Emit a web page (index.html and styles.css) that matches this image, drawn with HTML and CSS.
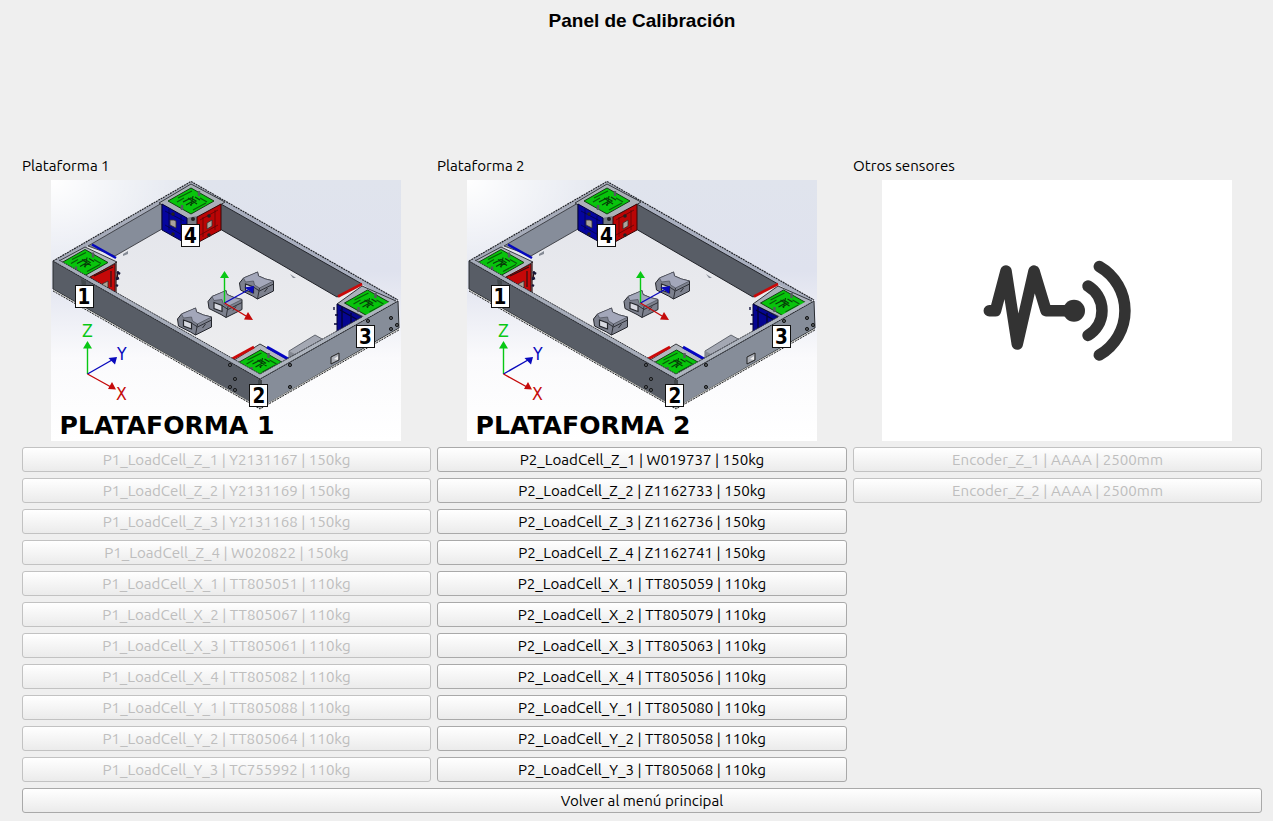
FILE: index.html
```
<!DOCTYPE html>
<html lang="es">
<head>
<meta charset="utf-8">
<title>Panel de Calibración</title>
<link rel="stylesheet" href="styles.css">
</head>
<body>
<svg class="defs" width="0" height="0" aria-hidden="true">
  <defs>
    <linearGradient id="sky" x1="0" y1="0" x2="0" y2="1">
      <stop offset="0" stop-color="#e0e4ed"/><stop offset=".35" stop-color="#dfe2ee"/><stop offset=".68" stop-color="#fafafc"/><stop offset="1" stop-color="#fff"/>
    </linearGradient>
    <radialGradient id="glow" cx="0" cy="0" r=".45">
      <stop offset="0" stop-color="#fff"/><stop offset="1" stop-color="#fff" stop-opacity="0"/>
    </radialGradient>
    <linearGradient id="floor" x1="0" y1="0" x2="0" y2="1">
      <stop offset="0" stop-color="#e2e4eb"/><stop offset="1" stop-color="#eeeeef"/>
    </linearGradient>
    <g id="plate">
      <path d="M0-13 23 0 0 13-23 0Z" fill="#08c40c" stroke="#123f12"/>
      <path d="M-13-3 1-10M-14 1-7-3M2 9 15 2M9-3 16 1" stroke="#075c09" stroke-width="1.2" fill="none"/>
      <path d="M-8 1 0-3 5 0-1 4M-3-3 6 3M2-5 0 5M-5 4 2 0M4-4 9-1" fill="none" stroke="#063f08" stroke-width="1.2"/>
      <path d="M8-10v5M-9 4v5" stroke="#555a60" stroke-width="2.4"/>
    </g>
    <g id="block">
      <path d="M0 12 4 7 14 3 18 1 19 5 26 8 34 10V20L18 28 13 25 1 19Z" fill="#7d818e" stroke="#24262c"/>
      <path d="M4 7 18 1 19 5 26 8 34 10 20 17 15 14 14 10 6 11Z" fill="#a3a7ba" stroke="#4a4d58" stroke-width=".7"/>
      <path d="M6 13 14 16V22L6 19Z" fill="#d9dbe2" stroke="#25272c" stroke-width="1.2"/>
      <path d="M20 17 18 28M14 16 20 20 34 13M28 17l-3 4" stroke="#2f3138" stroke-width="1" fill="none"/>
    </g>
    <symbol id="platform" viewBox="0 0 350 261">
      <rect width="350" height="261" fill="url(#sky)"/>
      <rect width="350" height="261" fill="url(#glow)"/>
      <path d="M140 6 344 121 209 196 7 81Z" fill="url(#floor)"/>
      <!-- rear walls -->
      <path d="M2 81 140 2 140 7 39 65 9 82Z" fill="#a6abb9"/>
      <path d="M37 66 111 23V49L64 76Z" fill="#868d9a" stroke="#292b30" stroke-width=".8"/>
      <path d="M140 2 347 120 340 121 140 7Z" fill="#a9afbf"/>
      <path d="M169 23.500 311 104 286 117 169 49Z" fill="#585d66" stroke="#22242a"/>
      <path d="M2 81 140 1.500 347 120" fill="none" stroke="#24262b" stroke-width="1.2" stroke-dasharray="2 .7"/>
      <path d="M72 74l5-3 0 3-5 2ZM239 94l6 4-3 0Z" fill="#858b95"/>
      <!-- rear corner -->
      <path d="M140 4 174 22 141 42 108 23Z" fill="#abb0b8" stroke="#36393e"/>
      <path d="M135 38 146 36V58H135Z" fill="#777c84"/>
      <path d="M111 24 136 38V64L111 50Z" fill="#05059e" stroke="#050536"/>
      <path d="M146 37 170 24V50L146 63Z" fill="#ba0505" stroke="#360707"/>
      <path d="M114 31 133 41M114 45 133 56M118 29V50M130 36V58" stroke="#04043e" stroke-width=".7" fill="none"/>
      <path d="M149 40 167 30M149 55 167 45M152 37V57M164 30V50" stroke="#510606" stroke-width=".7" fill="none"/>
      <path d="M119 40h4l2 1v7l-6-3ZM156 43l5-3v6l-5 3Z" fill="#aaa49d" stroke="#35312f" stroke-width=".8"/>
      <g fill="#222"><circle cx="122" cy="34" r="1.800"/><circle cx="122" cy="54" r="1.800"/><circle cx="158" cy="36" r="1.800"/><circle cx="158" cy="55" r="1.800"/><circle cx="142" cy="39" r="2"/></g>
      <use href="#plate" x="140" y="21"/>
      <!-- left corner -->
      <path d="M34 67 66 82 37 99 6 82Z" fill="#b1b6bf" stroke="#383b42"/>
      <path d="M39 97 64 84V113L57 111Z" fill="#c50808" stroke="#4b0808"/>
      <path d="M65 82v31M67 91l-1 9M43 96 62 87M60 91v16" stroke="#2c1212" stroke-width="1.200"/>
      <path d="M51 104l6-3v8l-6-3Z" fill="#aca195" stroke="#332b29" stroke-width=".8"/>
      <path d="M41 64.500 65 78" stroke="#0508be" stroke-width="2.500"/>
      <path d="M66 92l3 2M65 99l3-1M65 105l2 1" stroke="#181838" stroke-width="2.500"/>
      <use href="#plate" x="34" y="82.500"/>
      <!-- right corner -->
      <path d="M311 106 345 121 317 139 286 124Z" fill="#abb0bc" stroke="#32353b"/>
      <path d="M287 116.500 311 104" stroke="#c90909" stroke-width="2.600"/>
      <path d="M286 124 311 137 300 149 286 152Z" fill="#050591" stroke="#05053b"/>
      <path d="M289 130 307 140M291 127V149M300 133V146M283 127v3M284 135h3M283 144h3" stroke="#040434" stroke-width="1.300"/>
      <use href="#plate" x="316.500" y="123"/>
      <!-- front corner -->
      <path d="M209 164 239 181 209 199 180 182Z" fill="#b2b7bf" stroke="#36383d"/>
      <path d="M181 179 203 167" stroke="#cc0909" stroke-width="2.800"/>
      <path d="M216 167 239 180" stroke="#0505c4" stroke-width="2.800"/>
      <path d="M238 171 264 155 273 160 244 178 238 181Z" fill="#a4a8b3" stroke="#484c55" stroke-width=".8"/>
      <path d="M238 171 244 174 272 160 272 166 240 181Z" fill="#858993"/>
      <use href="#plate" x="209.500" y="183"/>
      <!-- front walls -->
      <path d="M2 81 209 199V228L2 109Z" fill="#585d66" stroke="#292c31"/>
      <path d="M209 199 347 121 348 148 209 228Z" fill="#868d99" stroke="#292c31"/>
      <path d="M2 81 8 80 209 194 209 199Z" fill="#a6acb9"/>
      <path d="M209 194 338 122 347 121 209 199Z" fill="#aeb4be"/>
      <path d="M8 80 209 194 311 137M2 81 209 199 347 121" stroke="#25272d" stroke-width=".9" fill="none" stroke-dasharray="2 .6"/>
      <path d="M2 110 209 228 348 149" fill="none" stroke="#c6c7c1"/>
      <path d="M2 111 209 229 348 150" fill="none" stroke="#222326" stroke-dasharray="2 1"/>
      <path d="M280 177l8-4v7l-8 4Z" fill="#adb0b8" stroke="#222"/>
      <path d="M283 179l4-3v4Z" fill="#eee"/>
      <g fill="#55585b" stroke="#17191b"><circle cx="179" cy="185" r="1.600"/><circle cx="184" cy="199" r="1.600"/><circle cx="179" cy="207" r="1.600"/><circle cx="184" cy="210" r="1.600"/><circle cx="239" cy="185" r="1.600"/><circle cx="239" cy="207" r="1.600"/><circle cx="317" cy="141" r="1.600"/><circle cx="340" cy="138" r="1.600"/><circle cx="340" cy="149" r="1.600"/><circle cx="346" cy="145" r="1.600"/></g>
      <path d="M30 99l5 2v7h-4ZM207 200h4v4h-4Z" fill="#42484c"/>
      <!-- sensors at the centre -->
      <use href="#block" x="188.500" y="91"/>
      <use href="#block" x="157" y="109.500"/>
      <use href="#block" x="126.500" y="127"/>
      <g fill="none" stroke-width="1.400">
        <path d="M173.500 123V96M36.500 194V166" stroke="#08c814"/>
        <path d="M173.500 123 197 110M36.500 194 61 180" stroke="#0909bd"/>
        <path d="M173.500 123 195 136M36.500 194 60 207" stroke="#c50a0a"/>
      </g>
      <path d="M173.500 91 178 98H169ZM36.500 161 41 168.500H32Z" fill="#08c814"/>
      <path d="M203 106 202 113.500 193.500 107.500ZM66 177 64 184.500 57.500 178Z" fill="#0909bd"/>
      <path d="M202 140 193 139.500 197 132ZM65 209.500 57 209 61 202Z" fill="#c50a0a"/>
      <g class="axis-label">
        <text x="31" y="157" fill="#08c814">Z</text>
        <text x="66" y="180" fill="#0909bd">Y</text>
        <text x="65" y="219.500" fill="#c50a0a">X</text>
      </g>
      <g fill="#fff" stroke="#111"><rect x="24.500" y="105.500" width="18" height="22"/><rect x="130.500" y="44.500" width="18" height="22"/><rect x="198.500" y="204.500" width="18" height="22"/><rect x="305.500" y="145.500" width="18" height="22"/></g>
      <g class="corner-label">
        <text x="33" y="123.500">1</text><text x="139.500" y="63">4</text><text x="208" y="223">2</text><text x="314.500" y="163.500">3</text>
      </g>
    </symbol>
  </defs>
</svg>
<main class="panel">
  <h1 class="title">Panel de Calibración</h1>
  <div class="columns">
    <section class="column narrow">
      <h2 class="heading">Plataforma 1</h2>
      <svg class="picture" viewBox="0 0 350 261"><use href="#platform" width="350" height="261"/><text class="caption" x="8.500" y="253.500" textLength="215" lengthAdjust="spacingAndGlyphs">PLATAFORMA 1</text></svg>
      <button class="btn" disabled>P1_LoadCell_Z_1 | Y2131167 | 150kg</button>
      <button class="btn" disabled>P1_LoadCell_Z_2 | Y2131169 | 150kg</button>
      <button class="btn" disabled>P1_LoadCell_Z_3 | Y2131168 | 150kg</button>
      <button class="btn" disabled>P1_LoadCell_Z_4 | W020822 | 150kg</button>
      <button class="btn" disabled>P1_LoadCell_X_1 | TT805051 | 110kg</button>
      <button class="btn" disabled>P1_LoadCell_X_2 | TT805067 | 110kg</button>
      <button class="btn" disabled>P1_LoadCell_X_3 | TT805061 | 110kg</button>
      <button class="btn" disabled>P1_LoadCell_X_4 | TT805082 | 110kg</button>
      <button class="btn" disabled>P1_LoadCell_Y_1 | TT805088 | 110kg</button>
      <button class="btn" disabled>P1_LoadCell_Y_2 | TT805064 | 110kg</button>
      <button class="btn" disabled>P1_LoadCell_Y_3 | TC755992 | 110kg</button>
    </section>
    <section class="column">
      <h2 class="heading">Plataforma 2</h2>
      <svg class="picture" viewBox="0 0 350 261"><use href="#platform" width="350" height="261"/><text class="caption" x="8.500" y="253.500" textLength="215" lengthAdjust="spacingAndGlyphs">PLATAFORMA 2</text></svg>
      <button class="btn">P2_LoadCell_Z_1 | W019737 | 150kg</button>
      <button class="btn">P2_LoadCell_Z_2 | Z1162733 | 150kg</button>
      <button class="btn">P2_LoadCell_Z_3 | Z1162736 | 150kg</button>
      <button class="btn">P2_LoadCell_Z_4 | Z1162741 | 150kg</button>
      <button class="btn">P2_LoadCell_X_1 | TT805059 | 110kg</button>
      <button class="btn">P2_LoadCell_X_2 | TT805079 | 110kg</button>
      <button class="btn">P2_LoadCell_X_3 | TT805063 | 110kg</button>
      <button class="btn">P2_LoadCell_X_4 | TT805056 | 110kg</button>
      <button class="btn">P2_LoadCell_Y_1 | TT805080 | 110kg</button>
      <button class="btn">P2_LoadCell_Y_2 | TT805058 | 110kg</button>
      <button class="btn">P2_LoadCell_Y_3 | TT805068 | 110kg</button>
    </section>
    <section class="column narrow">
      <h2 class="heading">Otros sensores</h2>
      <svg class="picture" viewBox="0 0 350 261">
        <rect width="350" height="261" fill="#fff"/>
        <g fill="none" stroke="#333" stroke-width="11.500" stroke-linecap="round" stroke-linejoin="round">
          <path d="M107.300 130.700H113.500L124 91 135.300 164 152 91 164 130.700H192"/>
          <path d="M206 106A28.800 28.800 0 0 1 206 155.400M217.300 86.500A51 51 0 0 1 217.300 175"/>
        </g>
        <circle cx="192" cy="130.700" r="11" fill="#333"/>
      </svg>
      <button class="btn" disabled>Encoder_Z_1 | AAAA | 2500mm</button>
      <button class="btn" disabled>Encoder_Z_2 | AAAA | 2500mm</button>
    </section>
  </div>
  <button class="btn back">Volver al menú principal</button>
</main>
</body>
</html>
```
FILE: styles.css
```
* { box-sizing: border-box; }
body { margin: 0; background: #efefef; color: #000; font: 15.13px/18px Ubuntu, "Noto Sans", sans-serif; }
.defs { position: absolute; width: 0; height: 0; }
.panel { display: flex; flex-direction: column; height: 821px; padding: 9px 11px 8px 22px; }
.title { margin: 0 0 124px; height: 23px; font: bold 19px/23px "Liberation Sans", Arial, sans-serif; text-align: center; }
.columns { display: grid; grid-template-columns: 409px 410px 409px; gap: 6px; margin-bottom: 6px; }
.column { display: flex; flex-direction: column; gap: 6px; }
.heading { margin: 0; height: 18px; font: inherit; line-height: 20px; }
.picture { display: block; align-self: center; width: 350px; height: 261px; }
.narrow .picture { margin-right: 1px; }
.btn { flex: none; width: 100%; height: 25px; padding: 0; border: 1px solid #a9a9a9; border-radius: 3px; background: linear-gradient(#fff, #ebebeb); color: #000; font: inherit; line-height: 23px; text-align: center; }
.btn:disabled { border-color: #c2c2c2; color: #bebebe; }
.caption { font: bold 24.5px "DejaVu Sans", sans-serif; }
.axis-label { font: 17.5px "DejaVu Sans Condensed", "DejaVu Sans", sans-serif; }
.corner-label { font: bold 20.5px "DejaVu Sans Condensed", "DejaVu Sans", sans-serif; text-anchor: middle; }
```
